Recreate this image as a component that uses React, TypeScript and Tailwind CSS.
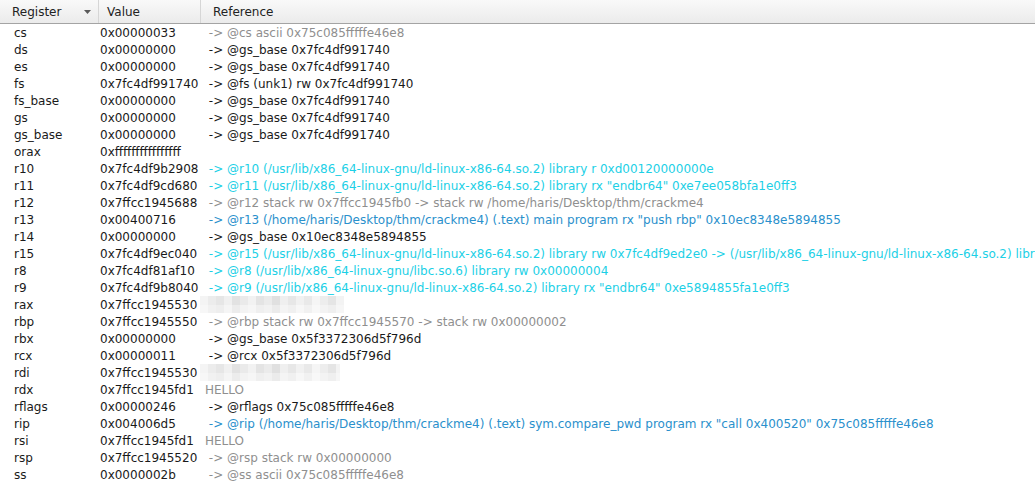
import React from "react";

type Tone = "plain" | "gray" | "cyan" | "blue" | "blur";

interface Row {
  name: string;
  value: string;
  ref: string;
  tone: Tone;
  blurWidth?: number;
}

const rows: Row[] = [
  { name: "cs", value: "0x00000033", ref: " -> @cs ascii 0x75c085fffffe46e8", tone: "gray" },
  { name: "ds", value: "0x00000000", ref: " -> @gs_base 0x7fc4df991740", tone: "plain" },
  { name: "es", value: "0x00000000", ref: " -> @gs_base 0x7fc4df991740", tone: "plain" },
  { name: "fs", value: "0x7fc4df991740", ref: " -> @fs (unk1) rw 0x7fc4df991740", tone: "plain" },
  { name: "fs_base", value: "0x00000000", ref: " -> @gs_base 0x7fc4df991740", tone: "plain" },
  { name: "gs", value: "0x00000000", ref: " -> @gs_base 0x7fc4df991740", tone: "plain" },
  { name: "gs_base", value: "0x00000000", ref: " -> @gs_base 0x7fc4df991740", tone: "plain" },
  { name: "orax", value: "0xffffffffffffffff", ref: "", tone: "plain" },
  { name: "r10", value: "0x7fc4df9b2908", ref: " -> @r10 (/usr/lib/x86_64-linux-gnu/ld-linux-x86-64.so.2) library r 0xd00120000000e", tone: "cyan" },
  { name: "r11", value: "0x7fc4df9cd680", ref: ' -> @r11 (/usr/lib/x86_64-linux-gnu/ld-linux-x86-64.so.2) library rx "endbr64" 0xe7ee058bfa1e0ff3', tone: "cyan" },
  { name: "r12", value: "0x7ffcc1945688", ref: " -> @r12 stack rw 0x7ffcc1945fb0 -> stack rw /home/haris/Desktop/thm/crackme4", tone: "gray" },
  { name: "r13", value: "0x00400716", ref: ' -> @r13 (/home/haris/Desktop/thm/crackme4) (.text) main program rx "push rbp" 0x10ec8348e5894855', tone: "blue" },
  { name: "r14", value: "0x00000000", ref: " -> @gs_base 0x10ec8348e5894855", tone: "plain" },
  { name: "r15", value: "0x7fc4df9ec040", ref: " -> @r15 (/usr/lib/x86_64-linux-gnu/ld-linux-x86-64.so.2) library rw 0x7fc4df9ed2e0 -> (/usr/lib/x86_64-linux-gnu/ld-linux-x86-64.so.2) library rw 0x7fc4df9ec040", tone: "cyan" },
  { name: "r8", value: "0x7fc4df81af10", ref: " -> @r8 (/usr/lib/x86_64-linux-gnu/libc.so.6) library rw 0x00000004", tone: "cyan" },
  { name: "r9", value: "0x7fc4df9b8040", ref: ' -> @r9 (/usr/lib/x86_64-linux-gnu/ld-linux-x86-64.so.2) library rx "endbr64" 0xe5894855fa1e0ff3', tone: "cyan" },
  { name: "rax", value: "0x7ffcc1945530", ref: "", tone: "blur", blurWidth: 145 },
  { name: "rbp", value: "0x7ffcc1945550", ref: " -> @rbp stack rw 0x7ffcc1945570 -> stack rw 0x00000002", tone: "gray" },
  { name: "rbx", value: "0x00000000", ref: " -> @gs_base 0x5f3372306d5f796d", tone: "plain" },
  { name: "rcx", value: "0x00000011", ref: " -> @rcx 0x5f3372306d5f796d", tone: "plain" },
  { name: "rdi", value: "0x7ffcc1945530", ref: "", tone: "blur", blurWidth: 140 },
  { name: "rdx", value: "0x7ffcc1945fd1", ref: "HELLO", tone: "gray" },
  { name: "rflags", value: "0x00000246", ref: " -> @rflags 0x75c085fffffe46e8", tone: "plain" },
  { name: "rip", value: "0x004006d5", ref: ' -> @rip (/home/haris/Desktop/thm/crackme4) (.text) sym.compare_pwd program rx "call 0x400520" 0x75c085fffffe46e8', tone: "blue" },
  { name: "rsi", value: "0x7ffcc1945fd1", ref: "HELLO", tone: "gray" },
  { name: "rsp", value: "0x7ffcc1945520", ref: " -> @rsp stack rw 0x00000000", tone: "gray" },
  { name: "ss", value: "0x0000002b", ref: " -> @ss ascii 0x75c085fffffe46e8", tone: "gray" },
];

const toneClass: Record<Tone, string> = {
  plain: "text-[#1a1a1a]",
  gray: "text-[#8f8f8f]",
  cyan: "text-[#1cd0e6]",
  blue: "text-[#2a90cc]",
  blur: "",
};

// pixelated redaction blocks, two rows of shades
const blurShades = [
  ["#f4f4f4", "#ececec", "#e6e6e6", "#f0f0f0", "#e2e2e2", "#eaeaea", "#f2f2f2", "#e4e4e4", "#ebebeb", "#e0e0e0", "#efefef", "#e7e7e7", "#f1f1f1", "#e9e9e9", "#f5f5f5", "#ededed", "#e5e5e5", "#f3f3f3"],
  ["#f7f7f7", "#f1f1f1", "#eeeeee", "#f5f5f5", "#ececec", "#f3f3f3", "#f6f6f6", "#efefef", "#f2f2f2", "#ebebeb", "#f4f4f4", "#f0f0f0", "#f7f7f7", "#f1f1f1", "#f8f8f8", "#f3f3f3", "#efefef", "#f6f6f6"],
];

function Blur({ width }: { width: number }) {
  return (
    <div className="flex flex-col h-[17px] overflow-hidden" style={{ width }}>
      {blurShades.map((line, i) => (
        <div key={i} className="flex h-[9px]">
          {line.map((c, j) => (
            <div key={j} className="w-[8px] shrink-0" style={{ background: c }} />
          ))}
        </div>
      ))}
    </div>
  );
}

export default function App() {
  return (
    <div
      className="w-[1035px] h-[491px] bg-white overflow-hidden text-[12px] text-[#1a1a1a]"
      style={{ fontFamily: '"DejaVu Sans", sans-serif' }}
    >
      {/* header */}
      <div className="flex h-[24px] bg-gradient-to-b from-[#f9f9f9] to-[#ebebeb] border-b border-[#a4a4a4] text-[#222]">
        <div className="w-[99px] flex items-center pl-[12px] pr-[7px] border-r border-[#d6d6d6]">
          <span>Register</span>
          <svg className="ml-auto" width="7" height="4" viewBox="0 0 7 4">
            <path d="M0 0h7L3.5 4z" fill="#5a5a5a" />
          </svg>
        </div>
        <div className="w-[102px] flex items-center pl-[8px] border-r border-[#d6d6d6]">Value</div>
        <div className="flex-1 flex items-center pl-[12px]">Reference</div>
      </div>

      {/* rows */}
      <div className="flex flex-col">
        {rows.map((r) => (
          <div key={r.name} className="flex h-[17px] items-center whitespace-pre">
            <div className="w-[100px] shrink-0 pl-[14px]">{r.name}</div>
            <div className="w-[100px] shrink-0">{r.value}</div>
            <div className="w-[5px] shrink-0" />
            {r.tone === "blur" ? (
              <div className="-ml-[5px]">
                <Blur width={r.blurWidth ?? 140} />
              </div>
            ) : (
              <div className={`flex-1 overflow-hidden ${toneClass[r.tone]}`}>{r.ref}</div>
            )}
          </div>
        ))}
      </div>
    </div>
  );
}
